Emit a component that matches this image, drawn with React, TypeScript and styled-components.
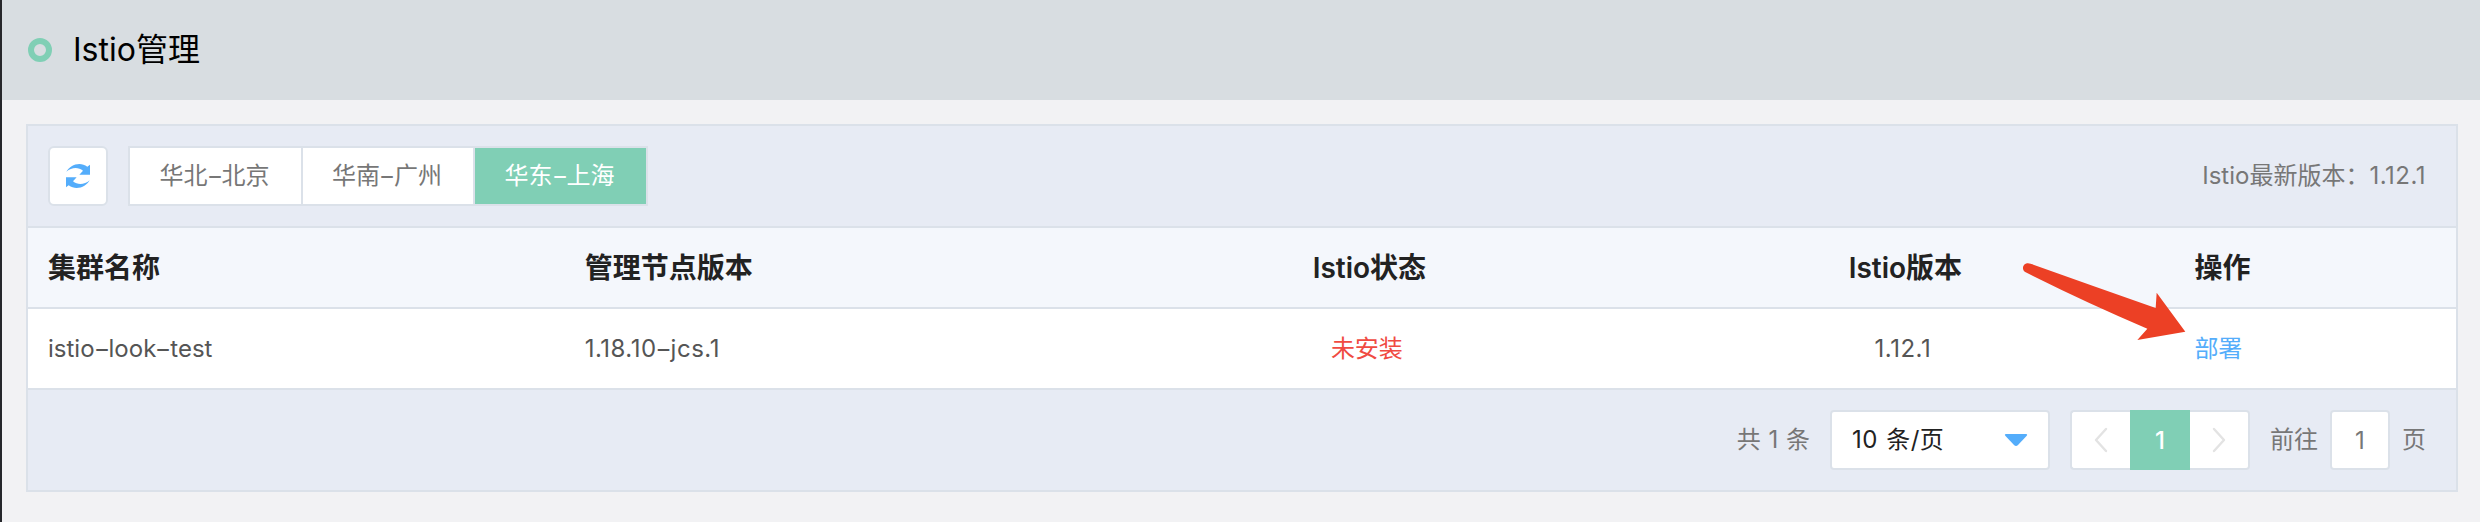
import React from "react";
import styled, { createGlobalStyle } from "styled-components";

const line = "#dbe1e9";
const green = "#80cfb5";
const blue = "#54adfb";

const GlobalStyle = createGlobalStyle`
  * { box-sizing: border-box; }
  body {
    margin: 0;
    background: #f2f2f4;
    font-family: Inter, "Noto Sans CJK SC", sans-serif;
    font-size: 24px;
    line-height: 36px;
    color: #555;
  }
`;

const Page = styled.div`
  position: relative;
  width: 2480px;
  height: 522px;
  overflow: hidden;
  border-left: 2px solid #26272b;
  background: #f2f2f4;
`;

const Header = styled.header`
  display: flex;
  align-items: center;
  gap: 21px;
  height: 100px;
  padding-left: 26px;
  background: #d8dde1;
`;

const Ring = styled.span`
  width: 24px;
  height: 24px;
  border: 6px solid ${green};
  border-radius: 50%;
`;

const Title = styled.h1`
  margin: 0;
  font-size: 32px;
  font-weight: 400;
  line-height: 44px;
  color: #000;
`;

const Panel = styled.main`
  width: 2432px;
  height: 368px;
  margin: 24px 0 0 24px;
  border: 2px solid ${line};
  background: #e7ebf4;
`;

const Toolbar = styled.div`
  display: flex;
  align-items: center;
  height: 100px;
  padding: 0 30px 0 20px;
`;

const RefreshButton = styled.button`
  display: flex;
  align-items: center;
  justify-content: center;
  width: 60px;
  height: 60px;
  margin-right: 20px;
  padding: 0;
  border: 2px solid ${line};
  border-radius: 6px;
  background: #fff;
`;

const Regions = styled.div`
  display: grid;
  grid-template-columns: 173px 172px 171px;
  height: 60px;
  border: 2px solid ${line};
`;

const Region = styled.button<{ $active?: boolean }>`
  padding: 0 2px 0 0;
  border: 0;
  border-right: ${(p) => (p.$active ? "0" : `2px solid ${line}`)};
  font: inherit;
  line-height: 56px;
  color: ${(p) => (p.$active ? "#fff" : "#777")};
  background: ${(p) => (p.$active ? green : "#fff")};
`;

const Dash = styled.span`
  display: inline-block;
  width: 14px;
  text-align: center;
  transform: scaleX(1.5);
`;

const Version = styled.span`
  letter-spacing: 0.5px;
`;

const Latest = styled.div`
  margin-left: auto;
  color: #777;
`;

const Row = styled.div<{ $head?: boolean }>`
  display: grid;
  grid-template-columns: 536.7px 536.7px 536px 536px 1fr;
  align-items: center;
  height: 81px;
  border-top: 2px solid ${line};
  background: ${(p) => (p.$head ? "#f4f7fc" : "#fff")};
  font-size: ${(p) => (p.$head ? 28 : 24)}px;
  font-weight: ${(p) => (p.$head ? 600 : 400)};
  color: ${(p) => (p.$head ? "#222" : "#555")};
`;

const Cell = styled.div<{ $center?: boolean; $color?: string }>`
  padding: 0 ${(p) => (p.$center ? 25 : 20)}px 0 20px;
  text-align: ${(p) => (p.$center ? "center" : "left")};
  color: ${(p) => p.$color || "inherit"};
`;

const HeadCell = styled(Cell)`
  padding-right: 20px;
`;

const ActionCell = styled(Cell)`
  padding-left: 21px;
`;

const Action = styled.a`
  color: ${blue};
`;

const Footer = styled.div`
  display: flex;
  align-items: center;
  justify-content: flex-end;
  height: 102px;
  padding-right: 30px;
  border-top: 2px solid ${line};
  color: #777;
`;

const Total = styled.span`
  word-spacing: 1px;
`;

const Select = styled.div`
  display: flex;
  align-items: center;
  justify-content: space-between;
  width: 220px;
  height: 60px;
  margin: 0 20px;
  padding: 0 20px;
  border: 2px solid ${line};
  border-radius: 4px;
  background: #fff;
  color: #222;
  letter-spacing: 0.5px;
  word-spacing: 1px;
`;

const Pager = styled.div`
  display: flex;
  width: 180px;
  height: 60px;
  margin-right: 20px;
`;

const Step = styled.button<{ $next?: boolean }>`
  display: flex;
  align-items: center;
  justify-content: center;
  width: 60px;
  padding: 0;
  border: 2px solid ${line};
  border-width: ${(p) => (p.$next ? "2px 2px 2px 0" : "2px 0 2px 2px")};
  border-radius: ${(p) => (p.$next ? "0 4px 4px 0" : "4px 0 0 4px")};
  background: #fff;
`;

const PageNumber = styled.span`
  width: 60px;
  height: 60px;
  line-height: 62px;
  text-align: center;
  font-weight: 500;
  color: #fff;
  background: ${green};
`;

const PageInput = styled.div`
  width: 60px;
  height: 60px;
  margin: 0 12px;
  border: 2px solid ${line};
  border-radius: 4px;
  line-height: 57px;
  text-align: center;
  background: #fff;
`;

const Pointer = styled.svg`
  position: absolute;
  left: 2018px;
  top: 258px;
`;

const regions = [
  ["华北", "北京"],
  ["华南", "广州"],
  ["华东", "上海"],
];

const RefreshIcon = () => (
  <svg width="26" height="26" viewBox="0 0 78 78" fill={blue}>
    <path d="M4 26C14 7 44-7 67 11L75 5V35H43L54 23C40 11 20 12 4 26Z" />
    <path d="M74 52C64 71 34 85 11 67L3 73V43H35L24 55C38 67 58 66 74 52Z" />
  </svg>
);

const Chevron = ({ next = false }) => (
  <svg width="14" height="26" viewBox="0 0 14 26" fill="none" stroke="#e3e3e3" strokeWidth="2.4" strokeLinecap="round" strokeLinejoin="round">
    <path d={next ? "M2 2L12 13L2 24" : "M12 2L2 13L12 24"} />
  </svg>
);

export default function App() {
  return (
    <Page>
      <GlobalStyle />
      <Header>
        <Ring />
        <Title>Istio管理</Title>
      </Header>
      <Panel>
        <Toolbar>
          <RefreshButton aria-label="刷新">
            <RefreshIcon />
          </RefreshButton>
          <Regions>
            {regions.map(([area, city], i) => (
              <Region key={city} $active={i === 2}>
                {area}<Dash>-</Dash>{city}
              </Region>
            ))}
          </Regions>
          <Latest>Istio最新版本：<Version>1.12.1</Version></Latest>
        </Toolbar>
        <Row $head>
          <HeadCell>集群名称</HeadCell>
          <HeadCell>管理节点版本</HeadCell>
          <HeadCell $center>Istio状态</HeadCell>
          <HeadCell $center>Istio版本</HeadCell>
          <ActionCell>操作</ActionCell>
        </Row>
        <Row>
          <Cell>istio<Dash>-</Dash>look<Dash>-</Dash>test</Cell>
          <Cell><Version>1.18.10<Dash>-</Dash>jcs.1</Version></Cell>
          <Cell $center $color="#f04b42">未安装</Cell>
          <Cell $center><Version>1.12.1</Version></Cell>
          <ActionCell><Action>部署</Action></ActionCell>
        </Row>
        <Footer>
          <Total>共 1 条</Total>
          <Select>
            10 条/页
            <svg width="24" height="14" viewBox="0 0 24 14" fill={blue}>
              <path d="M2 1H22Q24 1 22.5 3L14 12Q12 14 10 12L1.5 3Q0 1 2 1Z" />
            </svg>
          </Select>
          <Pager>
            <Step aria-label="上一页"><Chevron /></Step>
            <PageNumber>1</PageNumber>
            <Step $next aria-label="下一页"><Chevron next /></Step>
          </Pager>
          <span>前往</span>
          <PageInput>1</PageInput>
          <span>页</span>
        </Footer>
      </Panel>
      <Pointer width="170" height="86" viewBox="0 0 510 258" fill="#ec4025">
        <path d="M32 17Q220 84 407 150L410 104L496 221L352 246L382 212Q200 135 17 43C1 34 10 9 32 17Z" />
      </Pointer>
    </Page>
  );
}
